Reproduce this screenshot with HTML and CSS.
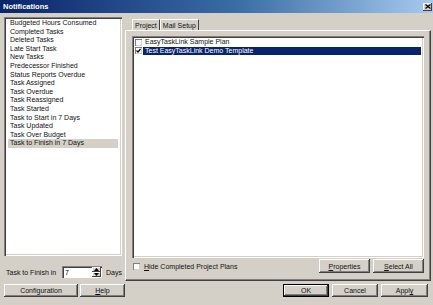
FILE: index.html
```html
<!DOCTYPE html>
<html lang="en">
<head>
  <meta charset="UTF-8" />
  <title>Notifications</title>
  <link rel="stylesheet" href="styles.css">
</head>
<body>
  <div class="window">
    <div class="titlebar">
      <span class="title">Notifications</span>
      <span class="close">
        <svg width="6" height="5" viewBox="0 0 6 5"><path d="M0.5 0.5 L5.5 4.5 M5.5 0.5 L0.5 4.5" stroke="#000" stroke-width="1.2"/></svg>
      </span>
    </div>

    <div class="content">
      <div class="left">
        <ul class="listbox events">
          <li>Budgeted Hours Consumed</li>
          <li>Completed Tasks</li>
          <li>Deleted Tasks</li>
          <li>Late Start Task</li>
          <li>New Tasks</li>
          <li>Predecessor Finished</li>
          <li>Status Reports Overdue</li>
          <li>Task Assigned</li>
          <li>Task Overdue</li>
          <li>Task Reassigned</li>
          <li>Task Started</li>
          <li>Task to Start in 7 Days</li>
          <li>Task Updated</li>
          <li>Task Over Budget</li>
          <li class="current">Task to Finish in 7 Days</li>
        </ul>
        <div class="days-row">
          <span class="days-label">Task to Finish in</span>
          <div class="spin">
            <span class="spin-value">7</span>
            <div class="spin-btns">
              <span class="spin-btn"><svg width="5" height="3" viewBox="0 0 5 3"><path d="M2.5 0 L5 3 L0 3 Z" fill="#000"/></svg></span>
              <span class="spin-btn"><svg width="5" height="3" viewBox="0 0 5 3"><path d="M0 0 L5 0 L2.5 3 Z" fill="#000"/></svg></span>
            </div>
          </div>
          <span class="days-unit">Days</span>
        </div>
      </div>

      <div class="right">
        <div class="tabs">
          <span class="tab active">Project</span>
          <span class="tab">Mail Setup</span>
        </div>
        <div class="panel">
          <ul class="listbox plans">
            <li><span class="check"></span><span class="plan-name">EasyTaskLink Sample Plan</span></li>
            <li class="picked"><span class="check on"><svg width="5" height="5" viewBox="0 0 5 5"><path d="M0.5 2.5 L2 4 L4.5 1" stroke="#000" stroke-width="1.2" fill="none"/></svg></span><span class="plan-name">Test EasyTaskLink Demo Template</span></li>
          </ul>
          <div class="panel-foot">
            <label class="hide-opt"><span class="check"></span><span><u>H</u>ide Completed Project Plans</span></label>
            <div class="btn-group">
              <button class="btn btn-props"><u>P</u>roperties</button>
              <button class="btn btn-all"><u>S</u>elect All</button>
            </div>
          </div>
        </div>
      </div>
    </div>

    <div class="footer">
      <div class="btn-group">
        <button class="btn btn-config">Configuration</button>
        <button class="btn btn-help"><u>H</u>elp</button>
      </div>
      <div class="btn-group">
        <button class="btn btn-ok default">OK</button>
        <button class="btn btn-cancel">Cancel</button>
        <button class="btn btn-apply">Appl<u>y</u></button>
      </div>
    </div>
  </div>
</body>
</html>
```

FILE: styles.css
```css
body {
  margin: 0;
  padding: 0;
  background: #d4d0c8;
  font-family: 'Liberation Sans', Arial, sans-serif;
  font-size: 7px;
  color: #111;
}
ul {
  list-style: none;
  margin: 0;
  padding: 0;
}
.window {
  width: 433px;
  height: 305px;
  background: #d4d0c8;
  overflow: hidden;
}
.titlebar {
  height: 13px;
  display: flex;
  align-items: center;
  justify-content: space-between;
  padding: 0 1px 0 3px;
  background: linear-gradient(to right, #0a246a, #3a6ea5 55%, #a6caf0);
}
.title {
  color: #fff;
  font-weight: bold;
  font-size: 7.5px;
}
.close {
  width: 9px;
  height: 8px;
  display: flex;
  align-items: center;
  justify-content: center;
  background: #d4d0c8;
  box-shadow: inset -1px -1px #404040, inset 1px 1px #fff;
}

.content {
  display: flex;
  gap: 3px;
  padding: 4px 2px 0 4px;
  height: 264px;
}
.left {
  width: 118px;
  display: flex;
  flex-direction: column;
}
.listbox {
  background: #fff;
  box-shadow: inset 1px 1px #808080, inset 2px 2px #404040, inset -1px -1px #fff, inset -2px -2px #d4d0c8;
  padding: 2px;
  box-sizing: border-box;
}
.events {
  height: 239px;
}
.events li {
  height: 8.6px;
  line-height: 8.6px;
  padding-left: 2px;
  margin: 0 0 0 2px;
  width: 108px;
  white-space: nowrap;
}
.events li.current {
  background: #d4d0c8;
}
.days-row {
  display: flex;
  align-items: center;
  margin-top: 10px;
  height: 12px;
  padding-left: 2px;
}
.days-label {
  width: 56px;
}
.spin {
  width: 40px;
  height: 12px;
  display: flex;
  background: #fff;
  box-shadow: inset 1px 1px #808080, inset 2px 2px #404040, inset -1px -1px #fff;
  box-sizing: border-box;
  padding: 2px 1px 1px 2px;
}
.spin-value {
  flex: 1;
  line-height: 9px;
  padding-left: 1px;
}
.spin-btns {
  width: 9px;
  display: flex;
  flex-direction: column;
  margin-top: -1px;
}
.spin-btn {
  flex: 1;
  display: flex;
  align-items: center;
  justify-content: center;
  background: #d4d0c8;
  box-shadow: inset -1px -1px #404040, inset 1px 1px #fff;
}
.days-unit {
  margin-left: 4px;
}

.right {
  width: 306px;
  display: flex;
  flex-direction: column;
}
.tabs {
  display: flex;
  padding-left: 7px;
  margin-top: 2px;
  height: 11px;
}
.tab {
  display: flex;
  align-items: center;
  padding: 0 2px;
  border-left: 1px solid #fff;
  border-top: 1px solid #fff;
  border-right: 1px solid #404040;
  border-radius: 1px 1px 0 0;
  box-sizing: border-box;
}
.panel {
  flex: 1;
  display: flex;
  flex-direction: column;
  border-top: 1px solid #fff;
  border-left: 1px solid #fff;
  border-right: 1px solid #404040;
  border-bottom: 1px solid #404040;
  box-shadow: inset -1px -1px #808080;
  padding: 5px 6px 6px 6px;
}
.plans {
  height: 222px;
  padding-top: 2px;
}
.plans li {
  display: flex;
  align-items: center;
  height: 8.5px;
  padding-left: 1px;
}
.plan-name {
  padding-left: 2px;
  margin-left: 1px;
  flex: 1;
  line-height: 8px;
  margin-right: 1px;
}
.plans li.picked .plan-name {
  background: #0a246a;
  color: #fff;
}
.check {
  width: 7px;
  height: 7px;
  background: #fff;
  box-sizing: border-box;
  box-shadow: inset 1px 1px #808080, inset -1px -1px #d4d0c8;
  display: flex;
  align-items: center;
  justify-content: center;
}
.panel-foot {
  display: flex;
  align-items: center;
  justify-content: space-between;
  margin-top: 1px;
  height: 14px;
}
.hide-opt {
  display: flex;
  align-items: center;
  gap: 4px;
  padding-left: 1px;
}
.btn-group {
  display: flex;
  gap: 3px;
}
.btn {
  font-family: inherit;
  font-size: 7px;
  background: #d4d0c8;
  border: none;
  margin: 0;
  padding: 0;
  color: #111;
  box-shadow: inset -1px -1px #404040, inset 1px 1px #fff, inset -2px -2px #808080;
}
.btn-props, .btn-all {
  width: 51px;
  height: 14px;
}
.footer {
  display: flex;
  justify-content: space-between;
  padding: 3px 5px 0 4px;
}
.footer .btn {
  height: 13px;
}
.btn-config { width: 74px; }
.btn-help { width: 45px; }
.footer .btn-group:first-child { gap: 2px; }
.btn-ok, .btn-cancel { width: 46px; }
.btn-apply { width: 47px; }
.btn.default {
  box-shadow: inset 0 0 0 1px #000, inset -2px -2px #404040, inset 2px 2px #fff, inset -3px -3px #808080;
}
```
